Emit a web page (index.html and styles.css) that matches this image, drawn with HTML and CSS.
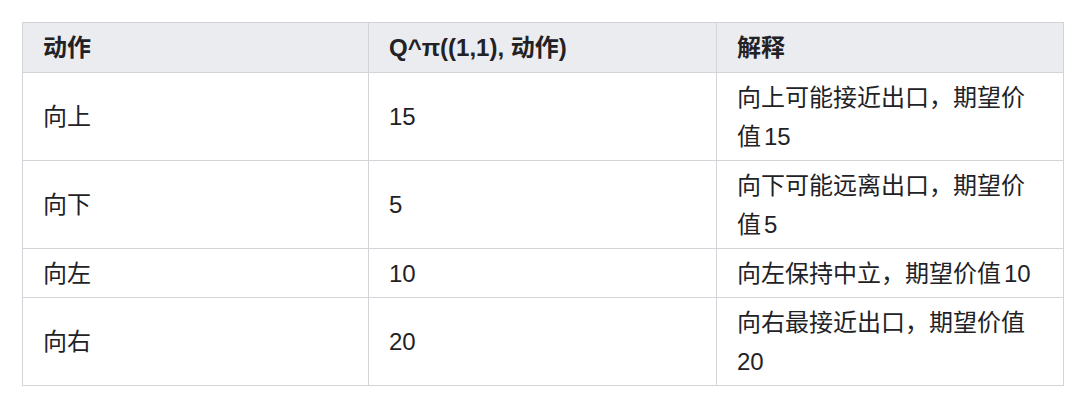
FILE: index.html
```html
<!DOCTYPE html>
<html lang="zh-CN">
<head>
<meta charset="utf-8">
<title>Q table</title>
<link rel="stylesheet" href="styles.css">
</head>
<body>
<div class="page">
  <table class="qtable">
    <colgroup>
      <col class="c1">
      <col class="c2">
      <col class="c3">
    </colgroup>
    <thead>
      <tr><th>动作</th><th>Q^π((1,1), 动作)</th><th>解释</th></tr>
    </thead>
    <tbody>
      <tr><td>向上</td><td>15</td><td>向上可能接近出口，期望价<span class="nb">值<span class="num">15</span></span></td></tr>
      <tr><td>向下</td><td>5</td><td>向下可能远离出口，期望价<span class="nb">值<span class="num">5</span></span></td></tr>
      <tr><td>向左</td><td>10</td><td>向左保持中立，期望价<span class="nb">值<span class="num">10</span></span></td></tr>
      <tr><td>向右</td><td>20</td><td>向右最接近出口，期望价值20</td></tr>
    </tbody>
  </table>
</div>
</body>
</html>
```
FILE: styles.css
```css
html, body {
  margin: 0;
  padding: 0;
  background: #ffffff;
}
.page {
  padding: 22px 0 0 22px;
}
.qtable {
  border-collapse: collapse;
  table-layout: fixed;
  width: 1041px;
  font-family: "Liberation Sans", "Noto Sans CJK SC", sans-serif;
  font-size: 24px;
  line-height: 39px;
  color: #222226;
}
.c1 { width: 346px; }
.c2 { width: 348px; }
.c3 { width: 347px; }
.qtable th,
.qtable td {
  border: 1px solid #d3d4da;
  padding: 4.5px 20px;
  text-align: left;
  vertical-align: middle;
}
.qtable th {
  background: #ebecef;
  font-weight: 600;
  padding-top: 5px;
  padding-bottom: 5px;
}
.nb {
  white-space: nowrap;
}
.num {
  margin-left: 3px;
}
```
